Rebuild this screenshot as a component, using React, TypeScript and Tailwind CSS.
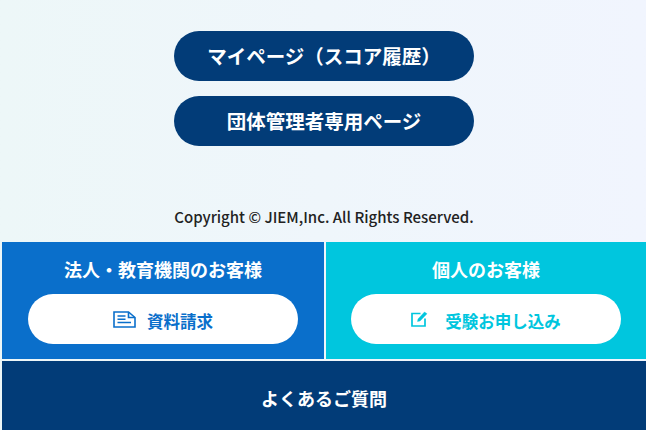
import React from "react";

const DocIcon = () => (
  <svg width="23" height="17" viewBox="0 0 23 17" fill="none" stroke="currentColor" strokeWidth="1.6">
    <path d="M1 1H15.5L22 6.5V16H1Z" />
    <path d="M15.5 1V6.5H22" />
    <path d="M4.5 5H12.5M4.5 8.2H12.5M4.5 11.5H18" />
  </svg>
);

const EditIcon = () => (
  <svg width="17" height="16" viewBox="0 0 17 16" fill="none" stroke="currentColor">
    <path d="M9.5 2.5H1V15H14V7.5" strokeWidth="1.7" />
    <path d="M6.5 10.5L7 8L13.5 1L16 2.8L9 10Z" fill="currentColor" strokeWidth="0.4" />
  </svg>
);

export default function App() {
  return (
    <div className="w-[646px] h-[430px] overflow-hidden flex flex-col bg-linear-to-r from-[#edf7f8] to-[#f1f5fe] font-['Noto_Sans_CJK_JP','Noto_Sans',sans-serif]">
      {/* top links */}
      <div className="h-[242px] pl-[2px] flex flex-col items-center pt-[31px]">
        <a className="w-[300px] h-[50px] rounded-full bg-[#023c78] text-white text-[19.5px] font-bold flex items-center justify-center">
          マイページ（スコア履歴）
        </a>
        <a className="mt-[15px] w-[300px] h-[50px] rounded-full bg-[#023c78] text-white text-[19.5px] font-bold flex items-center justify-center">
          団体管理者専用ページ
        </a>
        <p className="mt-[60px] text-[15px] leading-[22px] font-medium text-[#222222] text-center">
          Copyright © JIEM,Inc. All Rights Reserved.
        </p>
      </div>

      {/* customer panels */}
      <div className="h-[117px] pl-[2px] flex gap-[2px]">
        <div className="w-[322px] bg-[#0a6fcb] flex flex-col items-center pt-[14px]">
          <h2 className="text-white text-[18px] leading-[26px] font-bold">法人・教育機関のお客様</h2>
          <a className="mt-[12px] w-[270px] h-[50px] rounded-full bg-white text-[#0a6fcb] flex items-center justify-center gap-[11px] text-[16.5px] font-bold">
            <DocIcon />
            <span className="pt-[5px]">資料請求</span>
          </a>
        </div>
        <div className="w-[320px] bg-[#00c6de] flex flex-col items-center pt-[14px]">
          <h2 className="text-white text-[18px] leading-[26px] font-bold">個人のお客様</h2>
          <a className="mt-[12px] w-[270px] h-[50px] rounded-full bg-white text-[#00c6de] flex items-center justify-center gap-[17px] text-[16.5px] font-bold">
            <EditIcon />
            <span className="pt-[5px]">受験お申し込み</span>
          </a>
        </div>
      </div>

      {/* faq */}
      <div className="mt-[2px] ml-[2px] h-[69px] pt-[5px] bg-[#023c78] text-white text-[18px] font-bold flex items-center justify-center">
        よくあるご質問
      </div>
    </div>
  );
}
